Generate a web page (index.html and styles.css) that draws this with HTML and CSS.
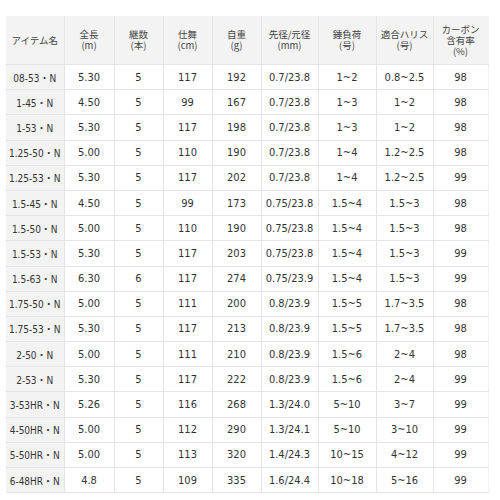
FILE: index.html
```html
<!DOCTYPE html>
<html lang="ja">
<head>
<meta charset="utf-8">
<link rel="stylesheet" href="styles.css">
</head>
<body>
<div class="wrap">
<table class="spec">
<colgroup>
<col class="c1"><col class="c2"><col class="c3"><col class="c4"><col class="c5"><col class="c6"><col class="c7"><col class="c8"><col class="c9">
</colgroup>
<thead>
<tr>
<th>アイテム名</th>
<th>全長<br>(m)</th>
<th>継数<br>(本)</th>
<th>仕舞<br>(cm)</th>
<th>自重<br>(g)</th>
<th>先径/元径<br>(mm)</th>
<th>錘負荷<br>(号)</th>
<th>適合ハリス<br>(号)</th>
<th>カーボン<br>含有率<br>(%)</th>
</tr>
</thead>
<tbody>
<tr><th>08-53・N</th><td>5.30</td><td>5</td><td>117</td><td>192</td><td>0.7/23.8</td><td>1~2</td><td>0.8~2.5</td><td>98</td></tr>
<tr><th>1-45・N</th><td>4.50</td><td>5</td><td>99</td><td>167</td><td>0.7/23.8</td><td>1~3</td><td>1~2</td><td>98</td></tr>
<tr><th>1-53・N</th><td>5.30</td><td>5</td><td>117</td><td>198</td><td>0.7/23.8</td><td>1~3</td><td>1~2</td><td>98</td></tr>
<tr><th>1.25-50・N</th><td>5.00</td><td>5</td><td>110</td><td>190</td><td>0.7/23.8</td><td>1~4</td><td>1.2~2.5</td><td>98</td></tr>
<tr><th>1.25-53・N</th><td>5.30</td><td>5</td><td>117</td><td>202</td><td>0.7/23.8</td><td>1~4</td><td>1.2~2.5</td><td>99</td></tr>
<tr><th>1.5-45・N</th><td>4.50</td><td>5</td><td>99</td><td>173</td><td>0.75/23.8</td><td>1.5~4</td><td>1.5~3</td><td>98</td></tr>
<tr><th>1.5-50・N</th><td>5.00</td><td>5</td><td>110</td><td>190</td><td>0.75/23.8</td><td>1.5~4</td><td>1.5~3</td><td>98</td></tr>
<tr><th>1.5-53・N</th><td>5.30</td><td>5</td><td>117</td><td>203</td><td>0.75/23.8</td><td>1.5~4</td><td>1.5~3</td><td>99</td></tr>
<tr><th>1.5-63・N</th><td>6.30</td><td>6</td><td>117</td><td>274</td><td>0.75/23.9</td><td>1.5~4</td><td>1.5~3</td><td>99</td></tr>
<tr><th>1.75-50・N</th><td>5.00</td><td>5</td><td>111</td><td>200</td><td>0.8/23.9</td><td>1.5~5</td><td>1.7~3.5</td><td>98</td></tr>
<tr><th>1.75-53・N</th><td>5.30</td><td>5</td><td>117</td><td>213</td><td>0.8/23.9</td><td>1.5~5</td><td>1.7~3.5</td><td>98</td></tr>
<tr><th>2-50・N</th><td>5.00</td><td>5</td><td>111</td><td>210</td><td>0.8/23.9</td><td>1.5~6</td><td>2~4</td><td>98</td></tr>
<tr><th>2-53・N</th><td>5.30</td><td>5</td><td>117</td><td>222</td><td>0.8/23.9</td><td>1.5~6</td><td>2~4</td><td>99</td></tr>
<tr><th>3-53HR・N</th><td>5.26</td><td>5</td><td>116</td><td>268</td><td>1.3/24.0</td><td>5~10</td><td>3~7</td><td>99</td></tr>
<tr><th>4-50HR・N</th><td>5.00</td><td>5</td><td>112</td><td>290</td><td>1.3/24.1</td><td>5~10</td><td>3~10</td><td>99</td></tr>
<tr><th>5-50HR・N</th><td>5.00</td><td>5</td><td>113</td><td>320</td><td>1.4/24.3</td><td>10~15</td><td>4~12</td><td>99</td></tr>
<tr><th>6-48HR・N</th><td>4.8</td><td>5</td><td>109</td><td>335</td><td>1.6/24.4</td><td>10~18</td><td>5~16</td><td>99</td></tr>
</tbody>
</table>
</div>
</body>
</html>
```

FILE: styles.css
```css
html, body {
  margin: 0;
  padding: 0;
  background: #ffffff;
}
.wrap {
  padding: 16px 0 0 6px;
}
.spec {
  border-collapse: collapse;
  table-layout: fixed;
  width: 482px;
  font-family: "DejaVu Sans Condensed", "DejaVu Sans", "Noto Sans CJK JP", sans-serif;
  font-stretch: condensed;
  font-size: 11px;
  color: #333333;
}
.c1 { width: 58px; }
.c2 { width: 50px; }
.c3 { width: 49px; }
.c4 { width: 49px; }
.c5 { width: 49px; }
.c6 { width: 57px; }
.c7 { width: 58px; }
.c8 { width: 57px; }
.c9 { width: 55px; }
.spec th, .spec td {
  border: 1px solid #e4e4e4;
  text-align: center;
  vertical-align: middle;
  padding: 0;
  font-weight: normal;
  white-space: nowrap;
  overflow: hidden;
}
.spec thead th {
  background: #f3f3f3;
  height: 48px;
  border-top: none;
  font-family: "Noto Sans CJK JP", "DejaVu Sans", sans-serif;
  font-stretch: normal;
  font-size: 9.5px;
  line-height: 11px;
  color: #444444;
}
.spec tbody tr {
  height: 25.2px;
}
.spec tbody th {
  background: #f3f3f3;
  font-size: 10px;
}
.spec td:last-child, .spec thead th:last-child {
  border-right: 1px solid #f3f3f3;
}
.spec tbody th:first-child, .spec thead th:first-child {
  border-left: none;
}
```
